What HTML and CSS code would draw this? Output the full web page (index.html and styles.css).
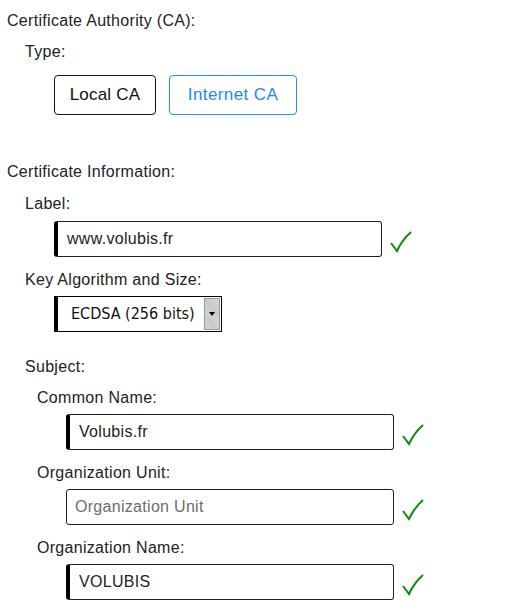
FILE: index.html
```html
<!DOCTYPE html>
<html>
<head>
<meta charset="utf-8">
<link rel="stylesheet" href="styles.css">
</head>
<body>
<div class="page">
  <div class="section-title">Certificate Authority (CA):</div>
  <div class="indent">
    <div class="label lab-type">Type:</div>
    <div class="btn-row">
      <button class="btn btn-local">Local CA</button>
      <button class="btn btn-blue">Internet CA</button>
    </div>
  </div>

  <div class="section-title sec2">Certificate Information:</div>
  <div class="indent">
    <div class="label">Label:</div>
    <div class="field-row">
      <div class="input wide filled">www.volubis.fr</div>
      <svg class="check" width="24" height="24" viewBox="0 0 24 24"><path d="M2 13 L8 21 Q13 10 22 2" fill="none" stroke="#118811" stroke-width="2"/></svg>
    </div>

    <div class="label lab-key">Key Algorithm and Size:</div>
    <div class="select">
      <span class="select-text">ECDSA (256 bits)</span>
      <span class="select-btn"><span class="arrow"></span></span>
    </div>

    <div class="label lab-subject">Subject:</div>
    <div class="indent2">
      <div class="label lab-cn">Common Name:</div>
      <div class="field-row sub-row">
        <div class="input filled">Volubis.fr</div>
        <svg class="check" width="24" height="24" viewBox="0 0 24 24"><path d="M2 13 L8 21 Q13 10 22 2" fill="none" stroke="#118811" stroke-width="2"/></svg>
      </div>
      <div class="label lab-ou">Organization Unit:</div>
      <div class="field-row sub-row">
        <div class="input placeholder">Organization Unit</div>
        <svg class="check" width="24" height="24" viewBox="0 0 24 24"><path d="M2 13 L8 21 Q13 10 22 2" fill="none" stroke="#118811" stroke-width="2"/></svg>
      </div>
      <div class="label lab-on">Organization Name:</div>
      <div class="field-row sub-row">
        <div class="input filled">VOLUBIS</div>
        <svg class="check" width="24" height="24" viewBox="0 0 24 24"><path d="M2 13 L8 21 Q13 10 22 2" fill="none" stroke="#118811" stroke-width="2"/></svg>
      </div>
    </div>
  </div>
</div>
</body>
</html>
```

FILE: styles.css
```css
html, body {
  margin: 0;
  padding: 0;
  background: #fff;
}
body {
  font-family: "Liberation Sans", Arial, sans-serif;
  font-size: 16px;
  color: #222;
  letter-spacing: 0.3px;
}
.page {
  padding: 12px 0 0 7px;
}
.section-title {
  line-height: 18px;
  height: 18px;
}
.sec2 {
  margin-top: 48px;
}
.indent {
  padding-left: 18px;
}
.indent2 {
  padding-left: 12px;
}
.label {
  line-height: 18px;
  height: 18px;
  margin-top: 14px;
}
.lab-type {
  margin-top: 13px;
}
.lab-key {
  margin-top: 14px;
}
.lab-subject {
  margin-top: 26px;
}
.lab-cn {
  margin-top: 13px;
}
.lab-ou,
.lab-on {
  margin-top: 14px;
}
.btn-row {
  display: flex;
  gap: 13px;
  margin-top: 14px;
  padding-left: 29px;
}
.btn {
  font-family: "Liberation Sans", Arial, sans-serif;
  font-size: 17px;
  height: 40px;
  background: #fff;
  border: 1px solid #111;
  border-radius: 4px;
  color: #111;
  padding: 0;
  margin: 0;
}
.btn-local {
  width: 102px;
  letter-spacing: 0.2px;
}
.btn-blue {
  width: 128px;
  border-color: #1e90ff;
  color: #1e88f0;
  letter-spacing: 0.4px;
}
.field-row {
  display: flex;
  align-items: flex-end;
  margin-top: 8px;
  padding-left: 29px;
}
.sub-row {
  margin-top: 7px;
}
.input {
  width: 314px;
  height: 34px;
  border: 1px solid #222;
  border-radius: 3px;
  padding: 0 0 0 8px;
  font-size: 16px;
  line-height: 34px;
  color: #222;
}
.input.filled {
  border-left: 4px solid #000;
  padding-left: 9px;
}
.input.placeholder {
  color: #6d6d6d;
  padding-left: 8px;
  width: 318px;
}
.check {
  margin-left: 7px;
  margin-bottom: 3px;
}
.select {
  display: flex;
  align-items: stretch;
  width: 163px;
  height: 34px;
  margin-top: 7px;
  margin-left: 29px;
  border: 1px solid #000;
  border-left: 4px solid #000;
}
.select-text {
  flex: 1;
  font-family: "DejaVu Sans Condensed", "DejaVu Sans", sans-serif;
  font-size: 16px;
  letter-spacing: 0;
  line-height: 34px;
  padding-left: 13px;
  color: #111;
}
.select-btn {
  width: 14px;
  margin: 1px 1px 1px 0;
  border: 1px solid #999;
  background: repeating-linear-gradient(45deg, #d8d8d8 0 1px, #c4c4c4 1px 2px);
  display: flex;
  align-items: center;
  justify-content: center;
}
.arrow {
  width: 0;
  height: 0;
  border-left: 3px solid transparent;
  border-right: 3px solid transparent;
  border-top: 4px solid #000;
}
```
